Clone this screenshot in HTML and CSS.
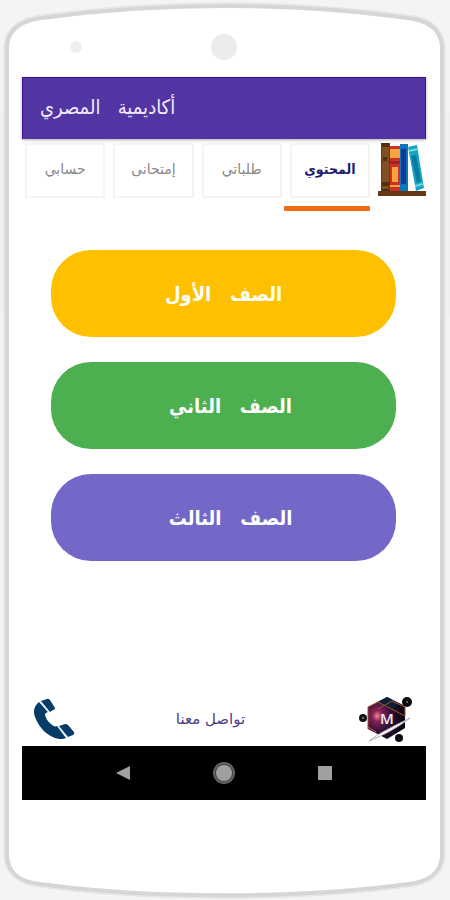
FILE: index.html
```html
<!DOCTYPE html>
<html lang="ar">
<head>
<meta charset="utf-8">
<meta name="viewport" content="width=device-width, initial-scale=1">
<title>أكاديمية المصري</title>
<link rel="stylesheet" href="styles.css">
</head>
<body>
<div class="phone">
  <svg class="shell" viewBox="0 0 450 900" preserveAspectRatio="none" aria-hidden="true">
    <path d="M0 112h6v205H0zM444 112h6v205h-6z" fill="#f0f0f0"/>
    <path d="M7 46C8 28 24 20 42 18C160 2 290 2 408 18C426 20 440 28 442 46V856C441 874 426 882 408 884C300 899 150 899 40 884C22 882 8 874 7 856Z" fill="#fff" stroke="#e6e6e6" stroke-width="7"/>
    <path d="M7 46C8 28 24 20 42 18C160 2 290 2 408 18C426 20 440 28 442 46V856C441 874 426 882 408 884C300 899 150 899 40 884C22 882 8 874 7 856Z" fill="#fff" stroke="#d6d6d6" stroke-width="4"/>
  </svg>
  <div class="sensors"><span class="sensor"></span><span class="camera"></span></div>
  <main class="screen">
    <header class="appbar"><h1>أكاديمية   المصري</h1></header>
    <nav class="tabs">
      <button class="tab" type="button">حسابي</button>
      <button class="tab" type="button">إمتحانى</button>
      <button class="tab" type="button">طلباتي</button>
      <button class="tab active" type="button">المحتوي</button>
      <svg class="books" viewBox="0 0 48 54" aria-hidden="true">
        <path d="M3 0h9v49H3z" fill="#805021"/>
        <path d="M3 0h9v4H3zM3 39h9v4H3zM3 46h9v3H3zM5 14h4v4H5z" fill="#52300d"/>
        <path d="M3 0h1v49H3zM11 0h1v49h-1z" fill="#633b15"/>
        <path d="M12 3h10v46H12z" fill="#cb3125"/>
        <path d="M12 6h10v9H12zM14 24h6v15h-6zM12 42h10v2H12z" fill="#f6a33c"/>
        <path d="M12 18h10v3H12z" fill="#a71f2d"/>
        <path d="M22 1h8v48h-8z" fill="#0878be"/>
        <path d="M23 6h5v35h-5z" fill="#143797"/>
        <path d="M30 4l9-2 7 43-8 3z" fill="#16a6c5"/>
        <path d="M33 13l5-1 5 26-4 2z" fill="#087b9f"/>
        <path d="M31 8l9-2M37 43l8-2" stroke="#70d8dd" stroke-width="2"/>
        <path d="M0 48h48v5H0z" fill="#633813"/>
      </svg>
    </nav>
    <div class="indicator"></div>
    <section class="grades">
      <button class="grade first" type="button">الصف   الأول</button>
      <button class="grade second" type="button">الصف   الثاني</button>
      <button class="grade third" type="button">الصف   الثالث</button>
    </section>
    <footer class="contact">
      <svg class="phone-icon" viewBox="0 0 42 42" aria-hidden="true">
        <path d="M6 4C1 8 0 13 2 19C6 30 15 39 26 41C29 41 31 41 33 40L24 28C22 29 20 28 18 26C14 23 13 20 12 17C12 15 13 15 15 14Z" fill="#073b68"/>
        <path d="M8 3L14 1Q15 0 17 2L22 10Q22 12 20 12L17 14ZM26 28L32 26Q34 26 35 27L41 34Q42 36 40 37L35 39Z" fill="#073b68"/>
        <path d="M7 3L16 15M25 28L34 40" stroke="#d9e7ee" stroke-width="1"/>
      </svg>
      <a href="#contact" id="contact">تواصل معنا</a>
      <svg class="brand" viewBox="0 0 54 48" aria-hidden="true">
        <defs>
          <radialGradient id="glow" cx=".25" cy=".45" r=".7">
            <stop offset="0" stop-color="#f08b94"/><stop offset=".18" stop-color="#8a2356"/>
            <stop offset=".5" stop-color="#35123c"/><stop offset="1" stop-color="#06070f"/>
          </radialGradient>
        </defs>
        <path d="M29 2L47 11V33L29 44L10 34V12Z" fill="url(#glow)"/>
        <path d="M29 2L42 9L33 13L20 7Z" fill="#0c2038"/>
        <path d="M10 34V12L20 7L47 21V12L34 6L20 14" fill="none" stroke="#a65132" stroke-width="1"/>
        <path d="M10 32L18 37" stroke="#d05e37" stroke-width="1"/>
        <circle cx="49" cy="7" r="5" fill="#0b0b0d"/><circle cx="49" cy="7" r="1" fill="#777"/>
        <circle cx="5" cy="23" r="4" fill="#10151a"/><circle cx="5" cy="23" r="1" fill="#8a9497"/>
        <circle cx="41" cy="43" r="4" fill="#0b0b12"/>
        <path d="M11 46C21 38 38 30 52 23C39 33 26 40 11 46Z" fill="#fff" stroke="#bba9b8" stroke-width="1"/>
        <text x="29" y="29" class="brand-letter">M</text>
      </svg>
    </footer>
    <nav class="system">
      <button type="button" aria-label="رجوع"><svg viewBox="0 0 16 16"><path d="M1 8L15 1V15Z" fill="#a0a0a0"/></svg></button>
      <button type="button" aria-label="الرئيسية"><svg class="home" viewBox="0 0 24 24"><circle cx="12" cy="12" r="10" fill="#444" stroke="#626262" stroke-width="2"/><circle cx="12" cy="12" r="8" fill="#a0a0a0"/></svg></button>
      <button type="button" aria-label="التطبيقات"><svg viewBox="0 0 16 16"><path d="M1 1h14v14H1z" fill="#a0a0a0"/></svg></button>
    </nav>
  </main>
</div>
</body>
</html>
```
FILE: styles.css
```css
* { box-sizing: border-box; }
body {
  margin: 0;
  background: #f4f4f4;
  font-family: "DejaVu Sans", "Noto Sans", sans-serif;
}
button {
  border: 0;
  padding: 0;
  background: none;
  font: inherit;
}
.phone {
  position: relative;
  min-height: 100vh;
  padding: 0 24px 100px 22px;
  display: flex;
  flex-direction: column;
}
.shell {
  position: absolute;
  inset: 0;
  width: 100%;
  height: 100%;
}
.sensors {
  position: relative;
  height: 77px;
  padding-top: 16px;
  display: grid;
  grid-template-columns: 1fr 26px 1fr;
  align-items: center;
}
.sensor {
  width: 12px;
  height: 12px;
  margin-left: 48px;
  border-radius: 50%;
  background: #efefef;
}
.camera {
  height: 26px;
  border-radius: 50%;
  background: #ececec;
}
.screen {
  position: relative;
  flex: 1;
  display: flex;
  flex-direction: column;
}
.appbar {
  height: 62px;
  padding: 0 17px 4px;
  display: flex;
  align-items: center;
  background: #5334a3;
  border: solid #3b128f;
  border-width: 1px 1px 0;
  box-shadow: 0 1px 3px #aaa;
}
h1 {
  margin: 0;
  color: #f0eafa;
  font-family: "DejaVu Sans Condensed", "DejaVu Sans", sans-serif;
  font-size: 20px;
  font-weight: 400;
  line-height: 28px;
  direction: rtl;
  white-space: pre;
}
.tabs {
  display: grid;
  grid-template-columns: repeat(4, 1fr) 48px;
  gap: 8px;
  padding: 4px 0 0 3px;
}
.tab {
  height: 55px;
  padding-bottom: 4px;
  border: 2px solid #f4f4f4;
  background: #fff;
  color: #888;
  font-size: 14px;
  direction: rtl;
}
.active {
  color: #241b70;
  font-family: "DejaVu Sans Condensed", "DejaVu Sans", sans-serif;
  font-weight: 700;
}
.books {
  width: 48px;
  height: 54px;
}
.indicator {
  width: 86px;
  height: 5px;
  margin: 8px 56px 0 auto;
  border-radius: 1px;
  background: #ef6c13;
}
.grades {
  padding: 39px 30px 0 29px;
  display: grid;
  gap: 25px;
}
.grade {
  height: 87px;
  border-radius: 40px;
  color: #fff;
  font-family: "DejaVu Sans Condensed", "DejaVu Sans", sans-serif;
  font-size: 20px;
  font-weight: 700;
  direction: rtl;
  white-space: pre;
}
.first { background: #ffc000; }
.second { background: #4caf50; }
.third { background: #7367c8; }
.second,
.third { padding-left: 14px; }
.contact {
  margin-top: auto;
  height: 54px;
  padding: 0 14px 0 11px;
  display: grid;
  grid-template-columns: 42px 1fr 66px;
  align-items: center;
}
.contact a {
  color: #4d3b86;
  font-size: 15px;
  text-align: center;
  text-decoration: none;
  direction: rtl;
}
.phone-icon {
  width: 42px;
  height: 42px;
}
.brand {
  width: 54px;
  height: 48px;
  justify-self: end;
}
.brand-letter {
  fill: #eee;
  font-family: "Open Sans", sans-serif;
  font-size: 15px;
  font-weight: 600;
  text-anchor: middle;
}
.system {
  height: 54px;
  padding: 0 50px;
  display: grid;
  grid-template-columns: repeat(3, 1fr);
  background: #000;
}
.system button {
  display: grid;
  place-items: center;
}
.system svg {
  width: 16px;
  height: 16px;
}
.system .home {
  width: 24px;
  height: 24px;
}
```
